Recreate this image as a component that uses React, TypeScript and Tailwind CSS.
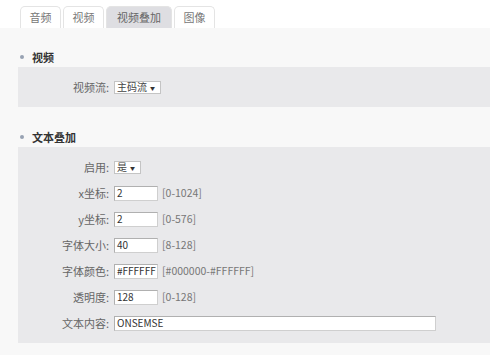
import React from "react";

const font = { fontFamily: '"Noto Sans CJK SC", "Noto Sans", sans-serif' };

const tabs = [
  { label: "音频", w: "w-[41px]" },
  { label: "视频", w: "w-[41px]" },
  { label: "视频叠加", w: "w-[66px]", active: true },
  { label: "图像", w: "w-[41px]" },
];

function SectionTitle({ text }: { text: string }) {
  return (
    <div className="flex h-[16px] items-center pl-[20px]">
      <span className="h-[4px] w-[4px] rounded-full bg-[#98a2b3]" />
      <span className="ml-[8px] text-[11px] font-bold text-[#333]">{text}</span>
    </div>
  );
}

function Row({ label, children }: { label: string; children: React.ReactNode }) {
  return (
    <div className="flex h-[26px] items-center">
      <div className="w-[93px] pr-[2px] text-right text-[11px] text-[#666]">{label}:</div>
      <div className="ml-[3px] flex items-center">{children}</div>
    </div>
  );
}

function Select({ value, w }: { value: string; w: string }) {
  return (
    <div
      className={`flex h-[13px] ${w} items-center justify-between border border-[#c4c4c4] bg-white pl-[2px] pr-[5px] text-[10px] leading-none text-[#444]`}
    >
      <span>{value}</span>
      <span className="text-[5px] text-[#333]">▼</span>
    </div>
  );
}

function Input({ value, w }: { value: string; w: string }) {
  return (
    <div
      className={`flex h-[15px] ${w} items-center border border-[#cfcfcf] border-t-[#b0b0b0] border-l-[#b0b0b0] bg-white pl-[2px] text-[10px] leading-none text-[#333]`}
    >
      {value}
    </div>
  );
}

function Range({ text }: { text: string }) {
  return <span className="ml-[4px] text-[10.5px] text-[#777]">{text}</span>;
}

export default function App() {
  return (
    <div className="h-[355px] w-[490px] overflow-hidden bg-[#f8f8f8]" style={font}>
      <div className="flex h-[28px] items-end gap-[2px] bg-white pl-[20px]">
        {tabs.map((t) => (
          <div
            key={t.label}
            className={`flex h-[22px] ${t.w} items-center justify-center rounded-t-[5px] border border-b-0 border-[#e4e4e4] text-[11px] ${
              t.active ? "bg-[#dedee2] text-[#666]" : "bg-white text-[#777]"
            }`}
          >
            {t.label}
          </div>
        ))}
      </div>

      <div className="pt-[21px]">
        <SectionTitle text="视频" />
        <div className="ml-[18px] mt-[2px] bg-[#e9e9eb] py-[7px]">
          <Row label="视频流">
            <Select value="主码流" w="w-[47px]" />
          </Row>
        </div>

        <div className="mt-[22px]">
          <SectionTitle text="文本叠加" />
        </div>
        <div className="ml-[18px] mt-[2px] bg-[#e9e9eb] py-[7px]">
          <Row label="启用">
            <Select value="是" w="w-[27px]" />
          </Row>
          <Row label="x坐标">
            <Input value="2" w="w-[44px]" />
            <Range text="[0-1024]" />
          </Row>
          <Row label="y坐标">
            <Input value="2" w="w-[44px]" />
            <Range text="[0-576]" />
          </Row>
          <Row label="字体大小">
            <Input value="40" w="w-[44px]" />
            <Range text="[8-128]" />
          </Row>
          <Row label="字体颜色">
            <Input value="#FFFFFF" w="w-[44px]" />
            <Range text="[#000000-#FFFFFF]" />
          </Row>
          <Row label="透明度">
            <Input value="128" w="w-[44px]" />
            <Range text="[0-128]" />
          </Row>
          <Row label="文本内容">
            <Input value="ONSEMSE" w="w-[322px]" />
          </Row>
        </div>
      </div>
    </div>
  );
}
